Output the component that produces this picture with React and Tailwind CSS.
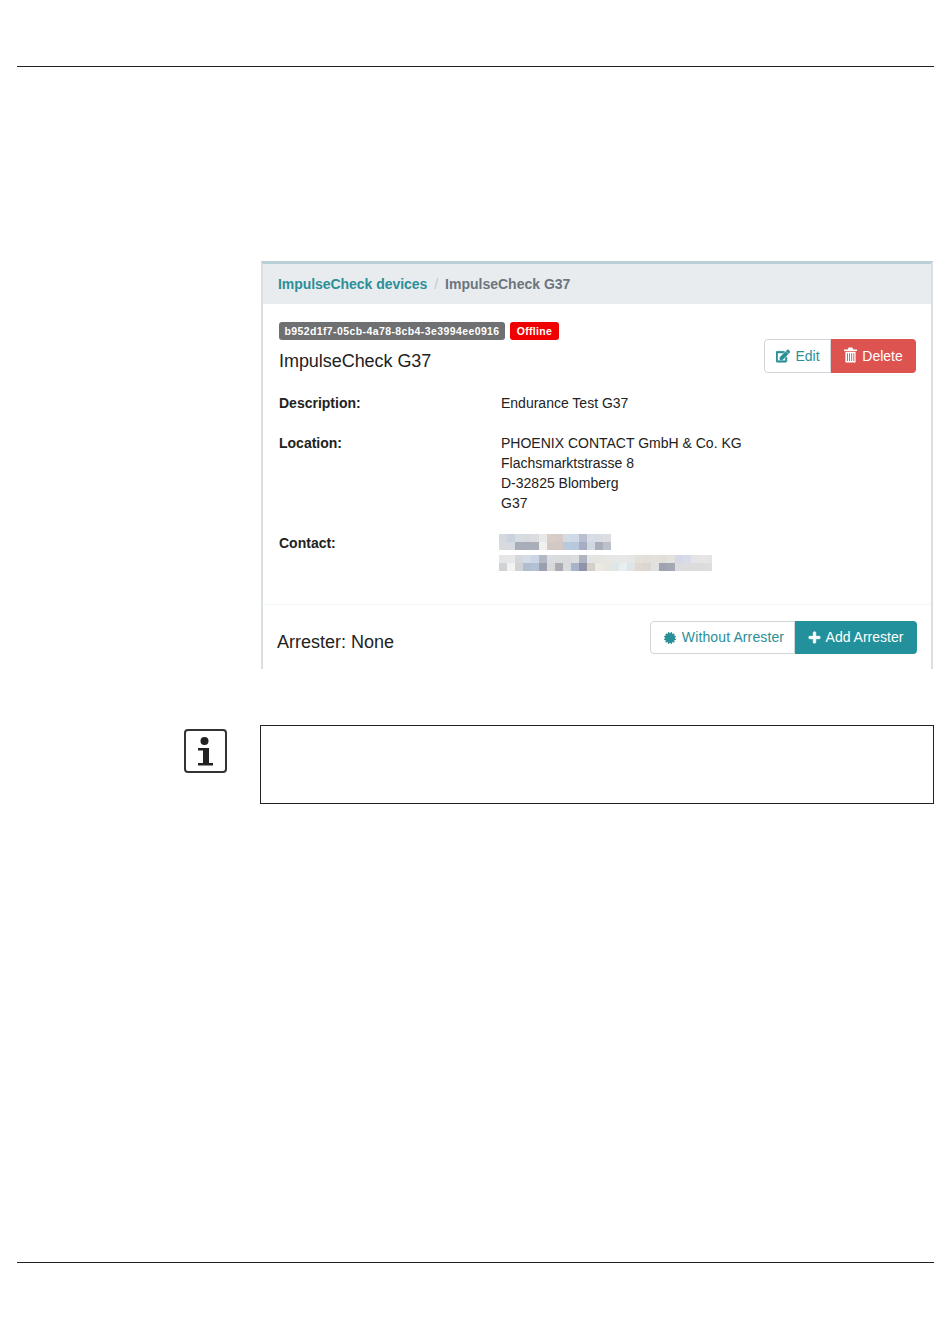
import React from 'react';
import { FaEdit, FaCertificate, FaPlus } from 'react-icons/fa';

// contact block is pixelated in the source, one array per 8px row
const mosaicRows = [
  { y: 0, cells: ['#d5d9de', '#c9d3de', '#d8dde2', '#d8dadf', '#dcdde0', '#e8e8e8', '#d9cdc8', '#d6cbc8', '#d3dbe5', '#cfdae6', '#b9bfd1', '#d6dde6', '#d9dce0', '#dcdee2'] },
  { y: 8, cells: ['#d8dadd', '#d6dadf', '#a9adba', '#a8adb9', '#a9aeb9', '#f0f0ef', '#d2c8c4', '#d3c8c4', '#b9cadd', '#b6c8dc', '#a7aec3', '#d0d8e2', '#a9aeb9', '#bcc1c9'] },
  { y: 21, cells: ['#e4e6e8', '#e6e7e8', '#d4d8dc', '#d4dce8', '#cbd5e5', '#b4b8c4', '#d9dce0', '#dadbdd', '#d8dadc', '#dcdde0', '#b0b4c0', '#e4e4e4', '#e6e4e0', '#e8e6e2', '#e6e8e8', '#e8e8e6', '#e6e6e6', '#e4e0da', '#e2ded8', '#e4e0da', '#e2ded8', '#e4e2de', '#d4d8e8', '#d8dce8', '#e4e4e6', '#e6e6e8', '#e4e4e4'] },
  { y: 29, cells: ['#d0d2d4', '#f2f2f2', '#d0d2d6', '#b0bed2', '#b4c0d4', '#9aa0ae', '#d8d8da', '#aaacb2', '#d8dade', '#a9b4cc', '#8f95a6', '#d4cfc8', '#ece8e2', '#e6e6e0', '#dfe6e8', '#e6eef0', '#dfe4e6', '#e0d8d0', '#ddd6ce', '#e0e0e0', '#9fa3b0', '#a4a8b4', '#dcdcde', '#dcdcde', '#dcdcde', '#dcdcde', '#dedede'] },
];

const Mosaic = () => (
  <svg width="213" height="37" viewBox="0 0 213 37" className="block blur-[0.6px]">
    {mosaicRows.map((row) =>
      row.cells.map((c, i) => <rect key={`${row.y}-${i}`} x={i * 8} y={row.y} width="8" height="8" fill={c} />)
    )}
  </svg>
);

const TrashIcon = () => (
  <svg width="13" height="16" viewBox="0 0 14 16" className="mb-[2px] mr-[5px]" fill="currentColor">
    <path d="M5 0h4l1 2h4v1.6H0V2h4z" />
    <path d="M1.5 4.4h11V16h-11zM3.2 6v8.5h1V6zm2.3 0v8.5h1V6zm2.3 0v8.5h1V6zm2.3 0v8.5h1V6z" fillRule="evenodd" />
  </svg>
);

const Field = ({ label, children, className }) => (
  <div className={`flex pl-[16px] text-[14px] leading-[20px] text-[#222] ${className}`}>
    <div className="w-[222px] font-bold">{label}</div>
    <div>{children}</div>
  </div>
);

export default function App() {
  return (
    <div className="h-[1323px] w-[950px] overflow-hidden bg-white font-['Liberation_Sans',sans-serif]">
      <div className="ml-[17px] mr-[16px] mt-[66px] border-t border-[#222]" />

      <div className="ml-[261px] mr-[17px] mt-[194px] h-[408px] overflow-hidden border-x-2 border-t-[3px] border-x-[#d8e0e4] border-t-[#b9d0d6]">
        <div className="flex h-[40px] items-center bg-[#e9ecef] pl-[15px] text-[14px] font-bold">
          <span className="tracking-[-0.05px] text-[#2b8f98]">ImpulseCheck devices</span>
          <span className="mx-[7px] font-normal text-[#c4c8cc]">/</span>
          <span className="text-[#6c757d]">ImpulseCheck G37</span>
        </div>

        <div className="flex pl-[16px] pr-[15px] pt-[18px]">
          <div className="flex-1">
            <div className="flex gap-[5px] text-[10.5px] font-bold leading-[18px] text-white">
              <span className="w-[226px] rounded-[3px] bg-[#6f7071] text-center tracking-[0.4px]">b952d1f7-05cb-4a78-8cb4-3e3994ee0916</span>
              <span className="w-[49px] rounded-[3px] bg-[#f00000] text-center tracking-[0.3px]">Offline</span>
            </div>
            <div className="mt-[9px] text-[18px] leading-[24px] tracking-[-0.05px] text-[#222]">ImpulseCheck G37</div>
          </div>
          <div className="mt-[17px] flex h-[34px] text-[14px]">
            <button className="flex w-[67px] items-center justify-center gap-[5px] rounded-l-[4px] border border-[#d0d5da] bg-white pl-[1px] text-[#2b8f98]">
              <FaEdit size={14} stroke="currentColor" strokeWidth={24} />
              Edit
            </button>
            <button className="flex w-[85px] items-center justify-center rounded-r-[4px] bg-[#dd5350] text-white">
              <TrashIcon />
              Delete
            </button>
          </div>
        </div>

        <Field label="Description:" className="mt-[20px]">Endurance Test G37</Field>
        <Field label="Location:" className="mt-[20px]">
          <div>PHOENIX CONTACT GmbH &amp; Co. KG</div>
          <div>Flachsmarktstrasse 8</div>
          <div>D-32825 Blomberg</div>
          <div>G37</div>
        </Field>
        <div className="mt-[20px] flex pl-[16px] text-[14px] leading-[20px] text-[#222]">
          <div className="w-[220px] font-bold">Contact:</div>
          <div className="pt-[1px]"><Mosaic /></div>
        </div>

        <div className="mt-[33px] flex h-[64px] items-center border-t border-[#f4f5f6] pl-[14px] pr-[14px]">
          <div className="flex-1 pt-[12px] text-[18px] text-[#222]">Arrester: None</div>
          <div className="mt-[2px] flex h-[33px] text-[14px]">
            <button className="flex w-[145px] items-center justify-center gap-[6px] rounded-l-[4px] border border-[#d0d5da] bg-white pl-[3px] tracking-[0.12px] text-[#2b8f98]">
              <FaCertificate size={12} />
              Without Arrester
            </button>
            <button className="flex w-[122px] items-center justify-center gap-[5px] rounded-r-[4px] bg-[#22919c] pr-[1px] text-white">
              <FaPlus size={13} stroke="currentColor" strokeWidth={30} />
              Add Arrester
            </button>
          </div>
        </div>
      </div>

      <div className="mt-[56px] flex">
        <div className="ml-[184px] mt-[4px] flex h-[44px] w-[43px] flex-col items-center rounded-[4px] border-2 border-[#333] pt-[5px]">
          <svg width="24" height="32" viewBox="0 0 24 32" fill="#222">
            <circle cx="10.5" cy="5" r="4" />
            <path d="M4 12h11v15h4v2.5H4V27h5V14.5H4z" />
          </svg>
        </div>
        <div className="ml-[33px] h-[79px] w-[674px] border border-[#222]" />
      </div>

      <div className="ml-[17px] mr-[16px] mt-[458px] border-t border-[#222]" />
    </div>
  );
}
